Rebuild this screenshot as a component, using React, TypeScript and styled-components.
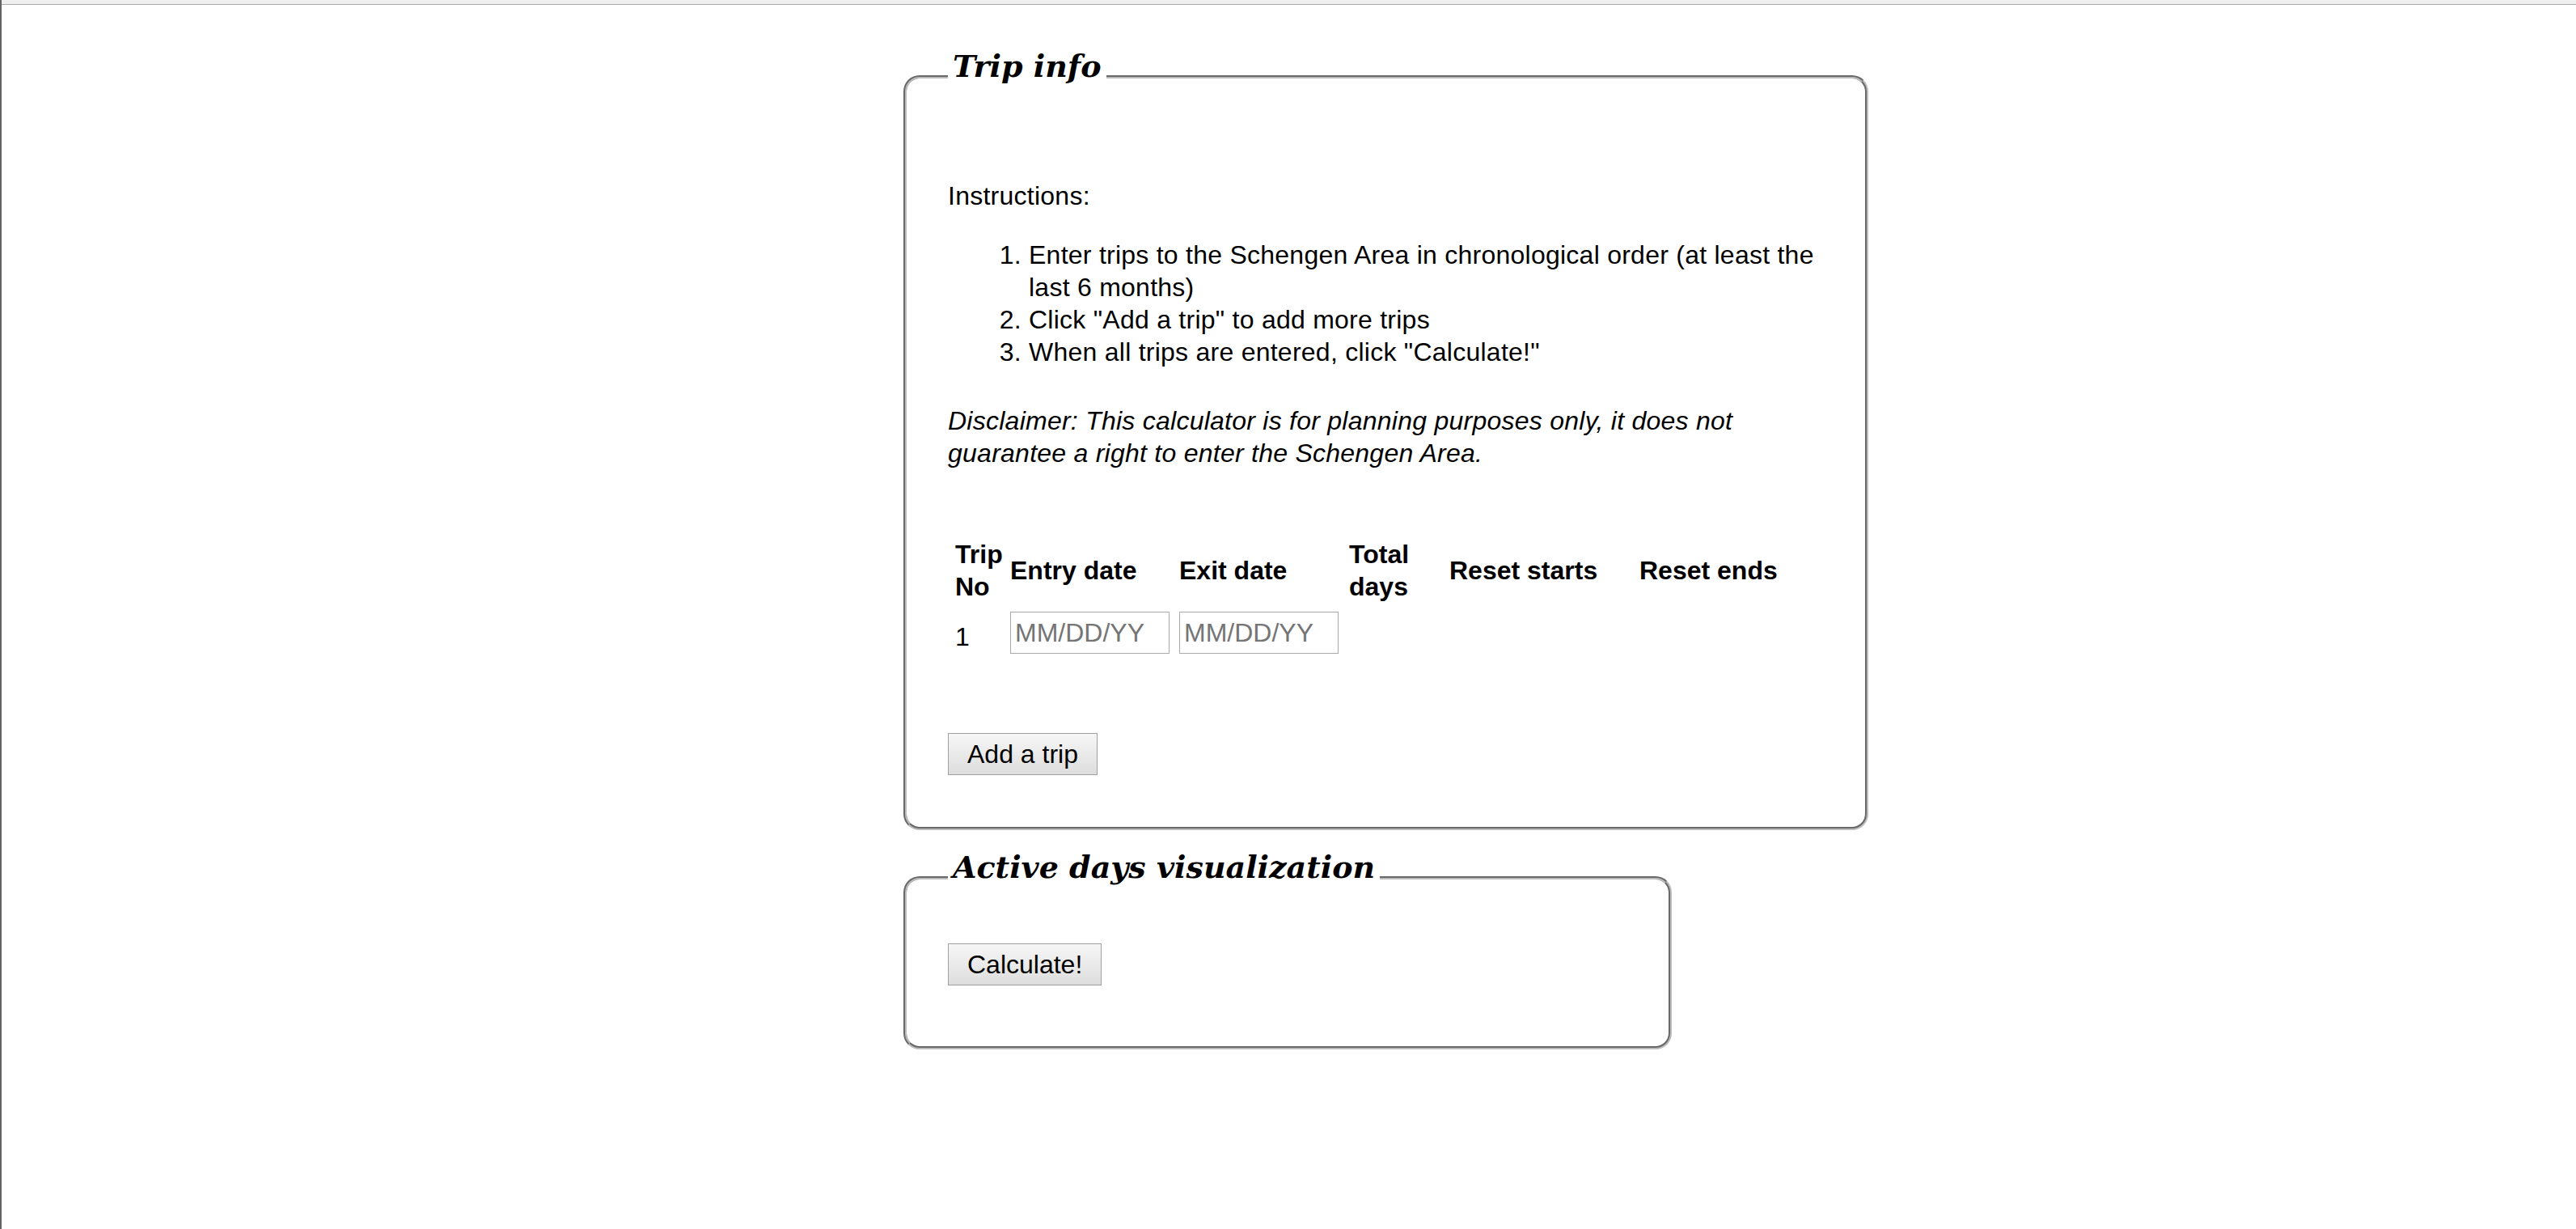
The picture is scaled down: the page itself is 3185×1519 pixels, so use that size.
import React from "react";
import styled, { createGlobalStyle } from "styled-components";

const GlobalStyle = createGlobalStyle`
  *, *::before, *::after { box-sizing: border-box; }
  html, body { margin: 0; padding: 0; background: #ffffff; }
  body {
    font-family: "Liberation Sans", Arial, sans-serif;
    font-size: 32px;
    line-height: 40px;
    letter-spacing: 0.25px;
    color: #000000;
  }
  #root { min-height: 100vh; }
`;

const Frame = styled.div`
  min-height: 100vh;
  border-left: 2px solid #646464;
  display: flex;
  flex-direction: column;
`;

const TopStrip = styled.div`
  height: 6px;
  background: #f0f0f0;
  border-bottom: 1px solid #ababab;
`;

const Main = styled.main`
  display: flex;
  flex-direction: column;
  align-items: flex-start;
  gap: 25px;
  padding: 55px 0 0 1115px;
`;

const Panel = styled.fieldset<{ $width: number; $bottom: number }>`
  width: ${(p) => p.$width}px;
  margin: 0;
  padding: 0 51px ${(p) => p.$bottom}px;
  border: 4px groove #bcbcbc;
  border-radius: 20px;
  min-inline-size: auto;
`;

const Legend = styled.legend`
  margin-left: 0;
  padding: 0 6px 26px;
  font-family: "DejaVu Serif", Georgia, serif;
  font-style: italic;
  font-weight: bold;
  font-size: 38px;
  line-height: 42px;
  letter-spacing: 0;
  color: #000000;
`;

const Para = styled.p<{ $top: number }>`
  margin: ${(p) => p.$top}px 0 0;
`;

const Disclaimer = styled.p`
  margin: 45px 0 0;
  font-style: italic;
`;

const Steps = styled.ol`
  margin: 33px 0 0;
  padding-left: 100px;
`;

const TripTable = styled.table`
  margin: 79px 0 0 3px;
  border-collapse: separate;
  border-spacing: 4px;
  table-layout: fixed;
  width: 1074px;
`;

const HeadCell = styled.th<{ $w: number }>`
  width: ${(p) => p.$w}px;
  padding: 2px;
  text-align: left;
  vertical-align: middle;
  font-weight: bold;
  letter-spacing: 0;
`;

const Cell = styled.td<{ $padTop?: number }>`
  padding: ${(p) => p.$padTop ?? 2}px 2px 2px;
  vertical-align: top;
`;

const DateInput = styled.input`
  display: block;
  margin-top: 3px;
  width: 197px;
  height: 52px;
  padding: 0 5px;
  border: 1px solid #a9a9a9;
  border-radius: 0;
  font-family: "Liberation Sans", Arial, sans-serif;
  font-size: 32px;
  letter-spacing: 0;
  color: #000000;
  background: #ffffff;
  &::placeholder { color: #757575; }
`;

const ActionButton = styled.button<{ $top: number }>`
  display: block;
  margin: ${(p) => p.$top}px 0 0 0;
  height: 52px;
  padding: 0 23px;
  border: 1px solid #a0a0a0;
  border-radius: 0;
  background: linear-gradient(#f6f6f6, #dddddd);
  font-family: "Liberation Sans", Arial, sans-serif;
  font-size: 32px;
  letter-spacing: 0;
  color: #000000;
`;

const columns = [
  { label: "Trip No", w: 64 },
  { label: "Entry date", w: 205 },
  { label: "Exit date", w: 206 },
  { label: "Total days", w: 120 },
  { label: "Reset starts", w: 231 },
  { label: "Reset ends", w: 220 },
];

export default function App() {
  return (
    <>
      <GlobalStyle />
      <Frame>
        <TopStrip />
        <Main>
          <Panel $width={1193} $bottom={64}>
            <Legend>Trip info</Legend>
            <Para $top={93}>Instructions:</Para>
            <Steps>
              <li>Enter trips to the Schengen Area in chronological order (at least the last 6 months)</li>
              <li>Click "Add a trip" to add more trips</li>
              <li>When all trips are entered, click "Calculate!"</li>
            </Steps>
            <Disclaimer>
              Disclaimer: This calculator is for planning purposes only, it does not guarantee a right to enter the Schengen Area.
            </Disclaimer>
            <TripTable>
              <thead>
                <tr>
                  {columns.map((c) => (
                    <HeadCell key={c.label} $w={c.w}>{c.label}</HeadCell>
                  ))}
                </tr>
              </thead>
              <tbody>
                <tr>
                  <Cell $padTop={16}>1</Cell>
                  <Cell><DateInput placeholder="MM/DD/YY" /></Cell>
                  <Cell><DateInput placeholder="MM/DD/YY" /></Cell>
                  <Cell />
                  <Cell />
                  <Cell />
                </tr>
              </tbody>
            </TripTable>
            <ActionButton $top={92}>Add a trip</ActionButton>
          </Panel>
          <Panel $width={950} $bottom={75}>
            <Legend>Active days visualization</Legend>
            <ActionButton $top={47}>Calculate!</ActionButton>
          </Panel>
        </Main>
      </Frame>
    </>
  );
}
